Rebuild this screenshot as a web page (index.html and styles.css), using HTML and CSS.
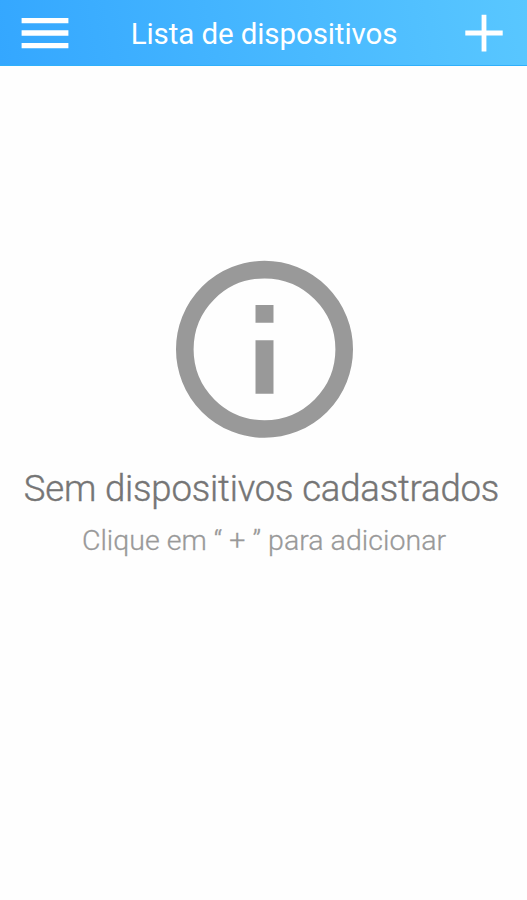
FILE: index.html
```html
<!DOCTYPE html>
<html lang="pt-BR">
<head>
<meta charset="utf-8">
<title>Lista de dispositivos</title>
<link rel="stylesheet" href="styles.css">
</head>
<body>
<header class="bar">
<svg class="menu" width="48" height="34" viewBox="0 0 48 34"><path d="M.6 4.6H47.4M.6 17H47.4M.6 29.7H47.4"/></svg>
<h1 class="title">Lista de dispositivos</h1>
<svg class="add" width="38" height="38" viewBox="0 0 38 38"><path d="M19 .8V37.5M.3 19H37.7"/></svg>
</header>
<main class="empty">
<svg class="info" width="178" height="178" viewBox="0 0 178 178"><circle cx="89.5" cy="89.3" r="79.7"/><path d="M80.5 45h18v17.8h-18zM80.5 80.3h18v53.5h-18z"/></svg>
<p class="message">Sem dispositivos cadastrados</p>
<p class="hint">Clique em “ + ” para adicionar</p>
</main>
</body>
</html>
```

FILE: styles.css
```css
body { margin: 0; height: 900px; background: #fefefe; font-family: Roboto, sans-serif; }
.bar { height: 66px; box-sizing: border-box; padding: 1px 24px 0 21px; border-bottom: 1px solid #2fb0fb; display: grid; grid-template-columns: 48px 1fr 38px; align-items: center; background: linear-gradient(80deg, #34a7ff, #59c7ff); }
.menu, .add { fill: none; stroke: #fff; stroke-width: 5.3; }
.add { stroke-width: 4.8; }
.title { margin: 1px 0 0 -6px; text-align: center; color: #fff; font-size: 29.5px; font-weight: 400; line-height: 36px; letter-spacing: -0.1px; white-space: nowrap; }
.empty { padding: 194px 0 0 1px; display: flex; flex-direction: column; align-items: center; }
.info circle { fill: none; stroke: #999; stroke-width: 17.6; }
.info path { fill: #999; }
.message { margin: 27px 0 0 -5px; color: #757575; font-size: 36.5px; font-weight: 300; line-height: 48px; letter-spacing: -0.17px; white-space: nowrap; -webkit-text-stroke: 0.4px #757575; }
.hint { margin: 10px 0 0; color: #999; font-size: 28.5px; font-weight: 300; line-height: 36px; letter-spacing: 0.04px; white-space: nowrap; -webkit-text-stroke: 0.3px #999; }
```
